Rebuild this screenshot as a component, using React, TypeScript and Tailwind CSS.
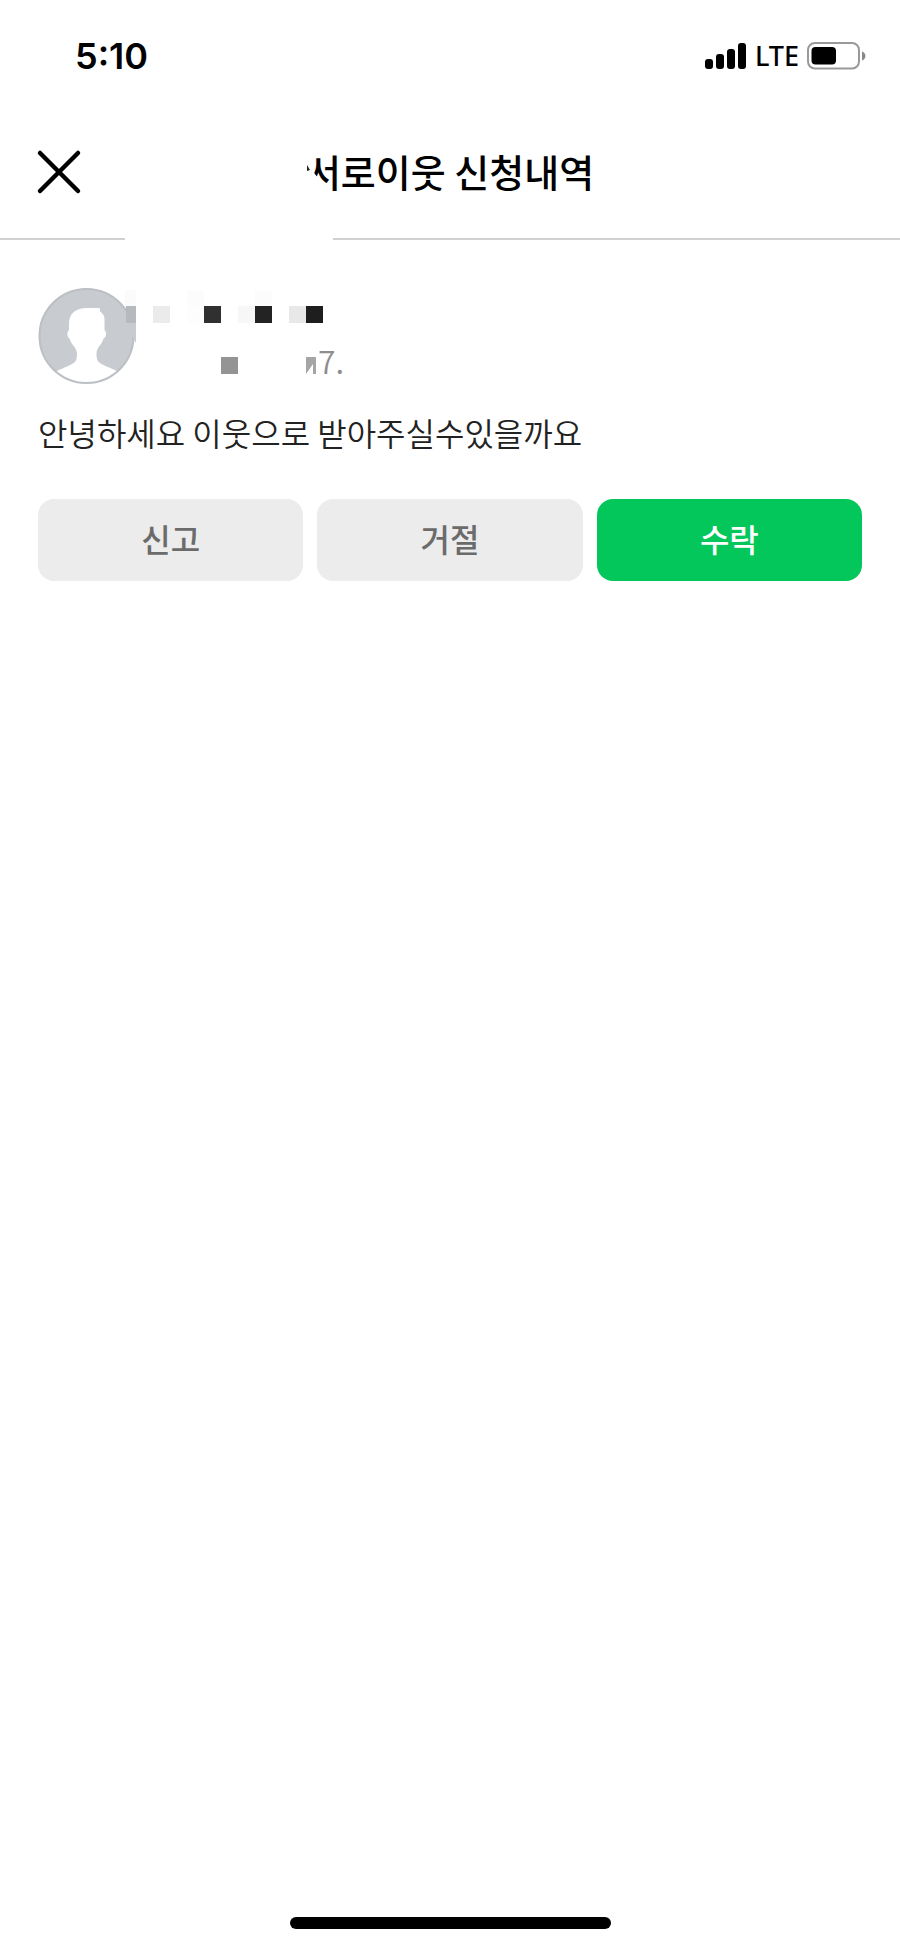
type Cell = { x: number; y: number; w: number; h: number; fill: string };

const SIZE = 17;

// blurred-out nickname and date
const cells: Cell[] = [
  { x: 87, y: 2, w: 11, h: SIZE, fill: "#fbfbfb" },
  { x: 88, y: 18, w: 10, h: SIZE, fill: "#b6babf" },
  { x: 115, y: 18, w: SIZE, h: SIZE, fill: "#ebebeb" },
  { x: 149, y: 2, w: SIZE, h: SIZE, fill: "#fcfcfc" },
  { x: 149, y: 18, w: SIZE, h: SIZE, fill: "#fdfdfd" },
  { x: 166, y: 18, w: SIZE, h: SIZE, fill: "#303030" },
  { x: 200, y: 18, w: SIZE, h: SIZE, fill: "#f7f7f7" },
  { x: 217, y: 2, w: SIZE, h: SIZE, fill: "#fcfcfc" },
  { x: 217, y: 18, w: SIZE, h: SIZE, fill: "#232323" },
  { x: 251, y: 18, w: SIZE, h: SIZE, fill: "#e8e8e8" },
  { x: 268, y: 18, w: SIZE, h: SIZE, fill: "#1e1e1e" },
  { x: 183, y: 69, w: SIZE, h: SIZE, fill: "#949494" },
];

const actions = [
  { label: "신고", className: "bg-[#ececec] text-[#6b6b6b]" },
  { label: "거절", className: "bg-[#ececec] text-[#6b6b6b]" },
  { label: "수락", className: "bg-[#03c75a] text-white" },
];

function StatusBar() {
  return (
    <div className="flex h-28 items-center justify-between pl-[75px] pr-[34px] text-black">
      <span className="font-['Inter',sans-serif] text-[36px] font-semibold leading-10">
        5:10
      </span>
      <div className="flex items-center gap-2">
        <svg width="42" height="28" viewBox="0 0 42 28" aria-hidden="true">
          <rect x="0" y="17" width="8" height="10" rx="3" />
          <rect x="11" y="12" width="8" height="15" rx="3" />
          <rect x="22" y="7" width="8" height="20" rx="3" />
          <rect x="33" y="1" width="8" height="26" rx="3" />
        </svg>
        <span className="font-['Noto_Sans',sans-serif] text-[27px] font-medium leading-8">
          LTE
        </span>
        <svg width="59" height="28" viewBox="0 0 59 28" aria-hidden="true">
          <rect
            x="1"
            y="1"
            width="51"
            height="25.5"
            rx="7"
            fill="none"
            stroke="#999"
            strokeWidth="2"
          />
          <rect x="4.5" y="5" width="24.5" height="17.5" rx="4" />
          <path d="M55 9.500c4.500 1.500 4.500 7.500 0 9z" fill="#888" />
        </svg>
      </div>
    </div>
  );
}

function Header() {
  return (
    <header>
      <div className="grid h-[126px] grid-cols-[1fr_auto_1fr] items-center px-9 pb-1.5">
        <button type="button" aria-label="닫기" className="justify-self-start">
          <svg width="46" height="46" viewBox="0 0 46 46" aria-hidden="true">
            <path
              d="M4 4l38 38M42 4L4 42"
              fill="none"
              stroke="#000"
              strokeWidth="4.500"
              strokeLinecap="round"
            />
          </svg>
        </button>
        <h1 className="relative pb-0.5 text-[38px] font-medium leading-[48px] text-black">
          서로이웃 신청내역
          <svg
            className="absolute left-0 top-0"
            width="24"
            height="48"
            viewBox="0 0 24 48"
            aria-hidden="true"
          >
            <path d="M0 0H5V22L16 36V48H0z" fill="#fff" />
            <path d="M1 18l3 5l-3 1z" fill="#222" />
          </svg>
        </h1>
      </div>
      <div className="flex">
        <div className="h-0.5 w-[125px] bg-[#d0d0d0]" />
        <div className="ml-52 h-0.5 flex-1 bg-[#d0d0d0]" />
      </div>
    </header>
  );
}

function Avatar() {
  return (
    <svg width="98" height="98" viewBox="0 0 98 98" aria-hidden="true">
      <clipPath id="face">
        <circle cx="48.500" cy="48" r="47.500" />
      </clipPath>
      <circle cx="48.500" cy="48" r="47.500" fill="#c8cbd0" />
      <path
        clipPath="url(#face)"
        fill="#fff"
        d="M60 20H49C38 20 31 25 31 36V42C28.500 44 29 49 31.500 50.500C33 57 39 59 39 66C39 76 36 75 19 83V98H79V83C62 75 58.500 76 58.500 66C58.500 59 64 57 65.500 50.500C68.500 49 69 44 66.500 42V31C66.500 27 64 25 62 23.500V20.500z"
      />
      <circle
        cx="48.500"
        cy="48"
        r="47"
        fill="none"
        stroke="#bcbfc4"
        strokeWidth="2"
      />
    </svg>
  );
}

function Profile() {
  return (
    <div className="relative flex">
      <Avatar />
      <svg
        className="absolute left-0 top-0"
        width="300"
        height="98"
        viewBox="0 0 300 98"
        aria-hidden="true"
      >
        {cells.map((cell, idx) => (
          <rect
            key={idx}
            x={cell.x}
            y={cell.y}
            width={cell.w}
            height={cell.h}
            fill={cell.fill}
          />
        ))}
        <path d="M90 35h8v20l-3-5z" fill="#c8cbd0" />
        <path d="M268 69h10v17h-3v-10l-7 10z" fill="#a5a5a5" />
      </svg>
      <span className="ml-[182px] mt-[52px] text-[32px] font-[350] leading-10 text-[#8e8e8e]">
        7.
      </span>
    </div>
  );
}

export default function App() {
  return (
    <div className="flex min-h-screen flex-col bg-white font-['Noto_Sans_CJK_KR',sans-serif]">
      <StatusBar />
      <Header />
      <main className="px-[38px] pt-12">
        <Profile />
        <p className="mt-[22px] text-[32px] font-[350] leading-[48px] text-[#222]">
          안녕하세요 이웃으로 받아주실수있을까요
        </p>
        <div className="mt-[43px] grid grid-cols-3 gap-3.5">
          {actions.map((action) => (
            <button
              key={action.label}
              type="button"
              className={`h-[82px] rounded-2xl pb-1 text-[32px] font-medium ${action.className}`}
            >
              {action.label}
            </button>
          ))}
        </div>
      </main>
      <div className="mx-auto mb-5 mt-auto h-3 w-[321px] rounded-full bg-black" />
    </div>
  );
}
